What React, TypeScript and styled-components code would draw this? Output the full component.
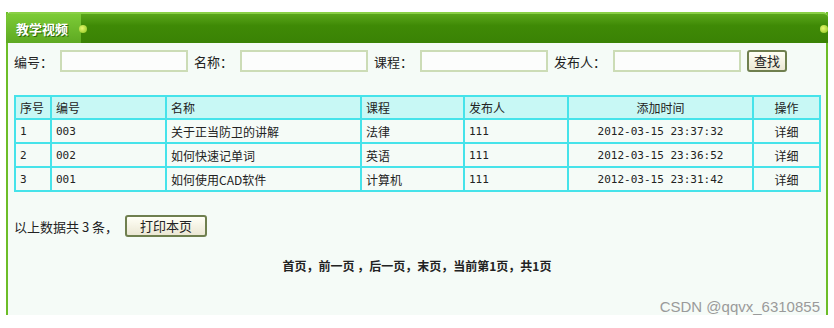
import styled, { createGlobalStyle } from "styled-components";

const GlobalStyle = createGlobalStyle`
  body {
    margin: 0;
    background: #ffffff;
    font-family: "Noto Sans CJK SC", "DejaVu Sans", sans-serif;
    font-size: 12px;
    color: #222;
  }
`;

const Page = styled.div`
  position: relative;
  width: 834px;
  height: 328px;
  padding: 12px 0 0 6px;
  box-sizing: border-box;
`;

const Panel = styled.div`
  width: 822px;
  height: 303px;
  box-sizing: border-box;
  border-left: 2px solid #6cbd27;
  border-right: 2px solid #6cbd27;
  background: #f5fbf7;
  display: flex;
  flex-direction: column;
`;

const Header = styled.div`
  display: flex;
  height: 31px;
  margin: 0 -2px;
  border-radius: 5px 5px 0 0;
  overflow: hidden;
  background: linear-gradient(#5aa61a, #3f8a06 40%, #3a8205);
  border-top: 2px solid #8ad046;
  box-sizing: border-box;
`;

const Tab = styled.div`
  width: 75px;
  display: flex;
  align-items: center;
  padding-left: 10px;
  box-sizing: border-box;
  background: linear-gradient(#7ccb36, #5ea922);
  color: #fff;
  font-weight: bold;
  font-size: 13px;
  text-shadow: 1px 1px 0 #2f6a0a;
`;

const Knob = styled.div`
  width: 8px;
  height: 8px;
  margin: auto 0;
  border-radius: 50%;
  background: radial-gradient(circle at 40% 40%, #e8f870, #86c21c);
  margin-left: -2px;
`;

const Spacer = styled.div`
  flex: 1;
`;

const Body = styled.div`
  padding: 7px 0 0 6px;
  display: flex;
  flex-direction: column;
`;

const SearchRow = styled.div`
  display: flex;
  align-items: center;
  height: 22px;
`;

const Label = styled.span`
  font-size: 13px;
  margin-right: 7px;
  white-space: nowrap;
`;

const Input = styled.input`
  width: 128px;
  height: 22px;
  box-sizing: border-box;
  border: 2px solid #ccdcb6;
  background: #fcfdfc;
  margin-right: 6px;
`;

const Button = styled.button<{ $pad: number }>`
  height: 22px;
  padding: 0 ${(p) => p.$pad}px;
  border: 2px solid #6f7f4f;
  border-radius: 3px;
  background: linear-gradient(#fffff6, #ebe7d4);
  font-family: "Noto Sans CJK SC", sans-serif;
  font-size: 13px;
  color: #222;
  line-height: 16px;
`;

const Table = styled.table`
  width: 805px;
  margin-top: 23px;
  table-layout: fixed;
  border-collapse: collapse;
  border: 2px solid #46e3ea;
  font-size: 12px;
`;

const Th = styled.th<{ $center?: boolean }>`
  height: 21px;
  padding: 0 4px;
  background: #c8f8f5;
  border: 2px solid #46e3ea;
  font-weight: normal;
  text-align: ${(p) => (p.$center ? "center" : "left")};
`;

const Td = styled.td<{ $center?: boolean; $mono?: boolean }>`
  height: 22px;
  padding: 0 4px;
  border: 2px solid #46e3ea;
  text-align: ${(p) => (p.$center ? "center" : "left")};
  font-family: ${(p) =>
    p.$mono ? '"DejaVu Sans Mono", monospace' : '"Noto Sans CJK SC", sans-serif'};
  font-size: ${(p) => (p.$mono ? "11px" : "12px")};
`;

const Footer = styled.div`
  display: flex;
  align-items: center;
  margin-top: 23px;
  height: 22px;
`;

const Count = styled.span`
  font-size: 13px;
  margin-right: 7px;
`;

const Pager = styled.div`
  margin-top: 20px;
  text-align: center;
  padding-right: 6px;
  font-weight: bold;
  font-size: 12px;
`;

const Watermark = styled.div`
  position: absolute;
  right: 14px;
  bottom: 13px;
  font-family: "Liberation Sans", Arial, sans-serif;
  font-size: 15px;
  color: #9a9a9a;
`;

const columns = [36, 115, 195, 103, 104, 185, 67];

const rows = [
  { id: 1, no: "003", name: "关于正当防卫的讲解", course: "法律", user: "111", time: "2012-03-15 23:37:32" },
  { id: 2, no: "002", name: "如何快速记单词", course: "英语", user: "111", time: "2012-03-15 23:36:52" },
  { id: 3, no: "001", name: "如何使用CAD软件", course: "计算机", user: "111", time: "2012-03-15 23:31:42" },
];

const App = () => (
  <Page>
    <GlobalStyle />
    <Panel>
      <Header>
        <Tab>教学视频</Tab>
        <Knob />
        <Spacer />
        <Knob />
      </Header>
      <Body>
        <SearchRow>
          <Label>编号：</Label>
          <Input />
          <Label>名称：</Label>
          <Input />
          <Label>课程：</Label>
          <Input />
          <Label>发布人：</Label>
          <Input />
          <Button $pad={5}>查找</Button>
        </SearchRow>
        <Table>
          <colgroup>
            {columns.map((w, i) => (
              <col key={i} style={{ width: w }} />
            ))}
          </colgroup>
          <thead>
            <tr>
              <Th>序号</Th>
              <Th>编号</Th>
              <Th>名称</Th>
              <Th>课程</Th>
              <Th>发布人</Th>
              <Th $center>添加时间</Th>
              <Th $center>操作</Th>
            </tr>
          </thead>
          <tbody>
            {rows.map((r) => (
              <tr key={r.id}>
                <Td $mono>{r.id}</Td>
                <Td $mono>{r.no}</Td>
                <Td>{r.name}</Td>
                <Td>{r.course}</Td>
                <Td $mono>{r.user}</Td>
                <Td $mono $center>{r.time}</Td>
                <Td $center>详细</Td>
              </tr>
            ))}
          </tbody>
        </Table>
        <Footer>
          <Count>以上数据共 3 条，</Count>
          <Button $pad={13}>打印本页</Button>
        </Footer>
        <Pager>首页，前一页 ，后一页，末页，当前第1页，共1页</Pager>
      </Body>
    </Panel>
    <Watermark>CSDN @qqvx_6310855</Watermark>
  </Page>
);

export default App;
